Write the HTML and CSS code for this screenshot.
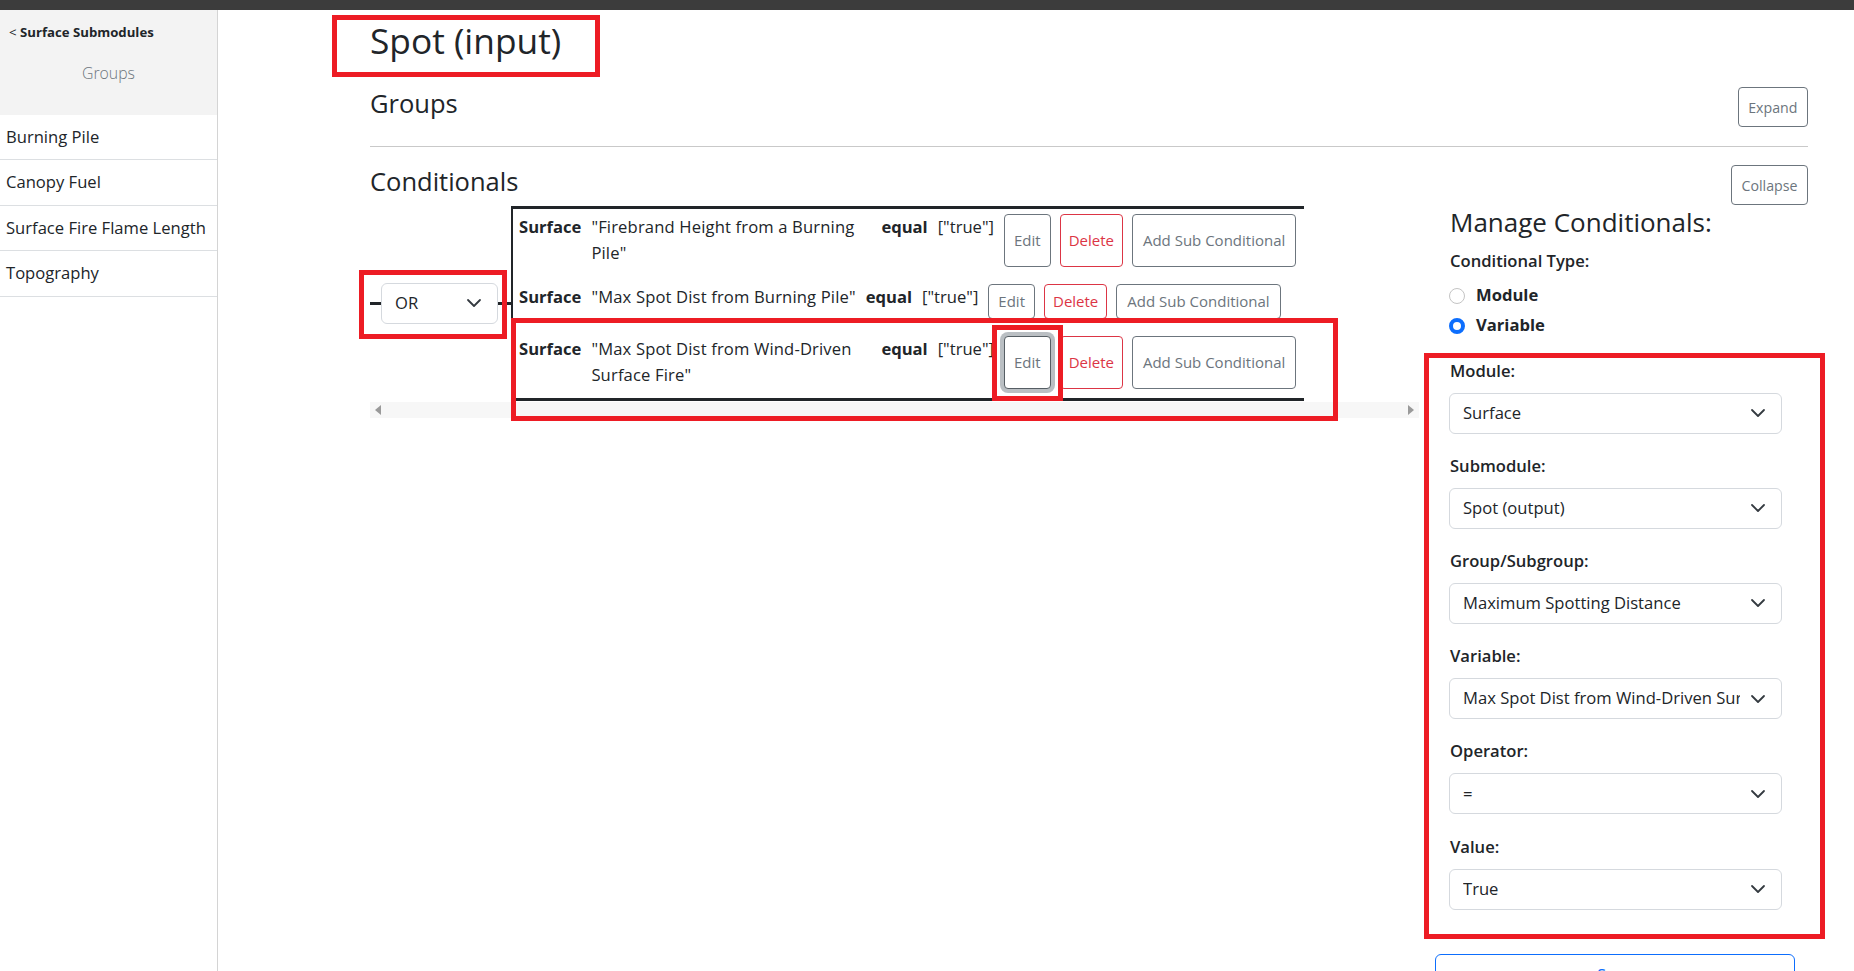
FILE: index.html
```html
<!DOCTYPE html>
<html lang="en">
<head>
<meta charset="utf-8">
<title>Spot (input)</title>
<link rel="stylesheet" href="styles.css">
</head>
<body>
<div class="topbar"></div>
<div class="app">
  <aside class="sidebar">
    <div class="side-head">
      <div class="back">&lt; <b>Surface Submodules</b></div>
      <div class="side-title">Groups</div>
    </div>
    <ul class="side-list">
      <li>Burning Pile</li>
      <li>Canopy Fuel</li>
      <li>Surface Fire Flame Length</li>
      <li>Topography</li>
    </ul>
  </aside>
  <main class="main">
    <div class="content">
      <h1 class="page-title">Spot (input)</h1>
      <div class="section-head groups-head">
        <h2>Groups</h2>
        <button class="outline-btn">Expand</button>
      </div>
      <hr class="rule">
      <div class="section-head cond-head">
        <h2>Conditionals</h2>
        <button class="outline-btn">Collapse</button>
      </div>
      <div class="cond-body">
        <div class="cond-left">
          <div class="logic">
            <span class="dash"></span>
            <div class="select or-select">
              <span class="sel-text">OR</span>
              <svg viewBox="0 0 16 16"><path d="M2 5l6 6 6-6" fill="none" stroke="#343a40" stroke-width="1.8" stroke-linecap="round" stroke-linejoin="round"/></svg>
            </div>
            <span class="dash dash-r"></span>
            <div class="cond-table">
              <div class="c-row">
                <span class="c-mod">Surface</span>
                <span class="c-name">"Firebrand Height from a Burning Pile"</span>
                <span class="c-op">equal</span>
                <span class="c-val">["true"]</span>
                <div class="c-actions">
                  <button class="btn">Edit</button>
                  <button class="btn btn-del">Delete</button>
                  <button class="btn btn-add">Add Sub Conditional</button>
                </div>
              </div>
              <div class="c-row">
                <span class="c-mod">Surface</span>
                <span class="c-name">"Max Spot Dist from Burning Pile"</span>
                <span class="c-op">equal</span>
                <span class="c-val">["true"]</span>
                <div class="c-actions">
                  <button class="btn">Edit</button>
                  <button class="btn btn-del">Delete</button>
                  <button class="btn btn-add">Add Sub Conditional</button>
                </div>
              </div>
              <div class="c-row">
                <span class="c-mod">Surface</span>
                <span class="c-name">"Max Spot Dist from Wind-Driven Surface Fire"</span>
                <span class="c-op">equal</span>
                <span class="c-val">["true"]</span>
                <div class="c-actions">
                  <button class="btn btn-focus">Edit</button>
                  <button class="btn btn-del">Delete</button>
                  <button class="btn btn-add">Add Sub Conditional</button>
                </div>
              </div>
            </div>
          </div>
          <div class="hscroll">
            <span class="arr arr-l"></span>
            <span class="arr arr-r"></span>
          </div>
        </div>
        <div class="cond-right">
          <h3 class="mc-title">Manage Conditionals:</h3>
          <div class="field-label ctype">Conditional Type:</div>
          <div class="radios">
            <div class="radio-row"><span class="radio"></span>Module</div>
            <div class="radio-row"><span class="radio checked"></span>Variable</div>
          </div>
          <div class="fields">
            <div class="field">
              <div class="field-label">Module:</div>
              <div class="select wide"><span class="sel-text">Surface</span><svg viewBox="0 0 16 16"><path d="M2 5l6 6 6-6" fill="none" stroke="#343a40" stroke-width="1.8" stroke-linecap="round" stroke-linejoin="round"/></svg></div>
            </div>
            <div class="field">
              <div class="field-label">Submodule:</div>
              <div class="select wide"><span class="sel-text">Spot (output)</span><svg viewBox="0 0 16 16"><path d="M2 5l6 6 6-6" fill="none" stroke="#343a40" stroke-width="1.8" stroke-linecap="round" stroke-linejoin="round"/></svg></div>
            </div>
            <div class="field">
              <div class="field-label">Group/Subgroup:</div>
              <div class="select wide"><span class="sel-text">Maximum Spotting Distance</span><svg viewBox="0 0 16 16"><path d="M2 5l6 6 6-6" fill="none" stroke="#343a40" stroke-width="1.8" stroke-linecap="round" stroke-linejoin="round"/></svg></div>
            </div>
            <div class="field">
              <div class="field-label">Variable:</div>
              <div class="select wide"><span class="sel-text">Max Spot Dist from Wind-Driven Surface Fire</span><svg viewBox="0 0 16 16"><path d="M2 5l6 6 6-6" fill="none" stroke="#343a40" stroke-width="1.8" stroke-linecap="round" stroke-linejoin="round"/></svg></div>
            </div>
            <div class="field">
              <div class="field-label">Operator:</div>
              <div class="select wide"><span class="sel-text">=</span><svg viewBox="0 0 16 16"><path d="M2 5l6 6 6-6" fill="none" stroke="#343a40" stroke-width="1.8" stroke-linecap="round" stroke-linejoin="round"/></svg></div>
            </div>
            <div class="field">
              <div class="field-label">Value:</div>
              <div class="select wide"><span class="sel-text">True</span><svg viewBox="0 0 16 16"><path d="M2 5l6 6 6-6" fill="none" stroke="#343a40" stroke-width="1.8" stroke-linecap="round" stroke-linejoin="round"/></svg></div>
            </div>
          </div>
          <button class="save-btn">Save</button>
        </div>
      </div>
    </div>
  </main>
</div>

<div class="anno anno-title"></div>
<div class="anno anno-or"></div>
<div class="anno anno-row"></div>
<div class="anno anno-edit"></div>
<div class="anno anno-panel"></div>
</body>
</html>
```

FILE: styles.css
```css
* { box-sizing: border-box; margin: 0; padding: 0; }

html, body { height: 100%; }

body {
  font-family: "Open Sans", "Noto Sans", sans-serif;
  font-size: 16.6px;
  line-height: 26.4px;
  color: #212529;
  background: #fff;
  overflow: hidden;
  position: relative;
}

button { font-family: inherit; cursor: pointer; }

.topbar { height: 10px; background: #3c3c3c; }

.app { display: flex; min-height: calc(100vh - 10px); }

/* Sidebar */
.sidebar {
  width: 218px;
  flex: none;
  border-right: 1px solid #d4d4d4;
}
.side-head {
  background: #f3f3f3;
  height: 105px;
  padding: 13px 9px 0 9px;
}
.back { font-size: 13.2px; line-height: 18px; }
.back b { font-weight: 700; }
.side-title {
  font-size: 15.8px;
  font-weight: 300;
  color: #6c757d;
  line-height: 24px;
  text-align: center;
  margin-top: 20px;
}
.side-list { list-style: none; }
.side-list li {
  padding: 9px 6px;
  border-bottom: 1px solid #dcdfe2;
}

/* Main */
.main { flex: 1; padding: 10px 0 0 152px; }
.content { width: 1438px; }

.page-title {
  font-size: 35.3px;
  font-weight: 500;
  line-height: 42px;
  margin-top: -1px;
}

.section-head {
  display: flex;
  justify-content: space-between;
  align-items: flex-start;
}
.section-head h2 {
  font-size: 25.5px;
  font-weight: 500;
  line-height: 30.6px;
}
.groups-head { margin-top: 26px; }
.groups-head h2 { margin-top: 1px; }
.cond-head { margin-top: 18px; }
.cond-head h2 { margin-top: 1px; }

.outline-btn {
  height: 40px;
  padding: 0 9.5px;
  border: 1px solid #6c757d;
  border-radius: 4px;
  background: #fff;
  color: #6c757d;
  font-size: 14.2px;
}

.rule {
  border: 0;
  border-top: 1px solid #c9c9c9;
  margin-top: 19px;
}

.cond-body {
  display: grid;
  grid-template-columns: 1049px 358px;
  column-gap: 31px;
  margin-top: 1px;
  align-items: start;
}

/* Left: logic tree */
.logic { display: flex; align-items: center; }
.dash { width: 11px; height: 3px; background: #212529; flex: none; }
.dash-r { width: 13px; }

.select {
  display: flex;
  align-items: center;
  height: 41px;
  border: 1px solid #d5d9de;
  border-radius: 6px;
  padding: 0 15px 0 13px;
  background: #fff;
}
.sel-text { flex: 1; white-space: nowrap; overflow: hidden; }
.select svg { flex: none; width: 16px; height: 16px; margin-left: 10px; }
.or-select { width: 117px; flex: none; }
.wide { width: 333px; }

.cond-table {
  width: 793px;
  flex: none;
  border-left: 2px solid #212529;
  border-top: 3px solid #212529;
  border-bottom: 3px solid #212529;
  padding: 5px 0 9px 6px;
  display: flex;
  flex-direction: column;
  gap: 17px;
}
.c-row { display: flex; gap: 10px; align-items: stretch; }
.c-mod, .c-op { font-weight: 700; flex: none; }
.c-name { max-width: 280px; letter-spacing: 0.15px; }
.c-val { flex: none; }
.c-actions { display: flex; gap: 9px; flex: none; }

.btn {
  display: flex;
  align-items: center;
  min-height: 35px;
  padding: 0 9px;
  border: 1px solid #6c757d;
  border-radius: 4px;
  background: #fff;
  color: #6c757d;
  font-size: 15px;
  line-height: 20px;
}
.btn-del { border-color: #dc3545; color: #dc3545; padding: 0 8px; }
.btn-add { padding: 0 10px; }
.btn-focus {
  border-color: #565e64;
  box-shadow: 0 0 0 4px rgba(130, 138, 145, 0.55);
}

.hscroll {
  height: 16px;
  margin-top: 1px;
  background: #f7f7f7;
  display: flex;
  justify-content: space-between;
  align-items: center;
  padding: 0 5px;
}
.arr { width: 0; height: 0; border-top: 5.5px solid transparent; border-bottom: 5.5px solid transparent; }
.arr-l { border-right: 6px solid #9a9a9a; }
.arr-r { border-left: 6px solid #9a9a9a; }

/* Right: manage panel */
.mc-title {
  font-size: 26px;
  font-weight: 500;
  line-height: 30.6px;
  margin-top: 1px;
}
.field-label { font-weight: 600; line-height: 26px; }
.ctype { margin-top: 10px; }
.radios { margin-top: 7px; }
.radio-row {
  display: flex;
  align-items: center;
  gap: 11px;
  height: 30px;
  font-weight: 700;
  margin-left: -1px;
}
.radio {
  width: 16px;
  height: 16px;
  border-radius: 50%;
  border: 1px solid #c4c4c4;
  background: #fff;
  flex: none;
}
.radio.checked { border: 4px solid #0d6efd; }

.fields { margin-top: 17px; display: flex; flex-direction: column; gap: 19.2px; }
.field .field-label { margin-bottom: 9px; }
.field .select { margin-left: -1px; }

.save-btn {
  display: block;
  width: 360px;
  height: 42px;
  margin: 44px 0 0 -15px;
  border: 1px solid #0d6efd;
  border-radius: 6px;
  background: #fff;
  color: #0d6efd;
  font-size: 16.6px;
}

/* Red annotation boxes drawn over the screenshot */
.anno { position: absolute; border: 5px solid #ed1c24; pointer-events: none; }
.anno-title { left: 332px; top: 15px; width: 268px; height: 62px; }
.anno-or { left: 359px; top: 270px; width: 148px; height: 69px; }
.anno-row { left: 511px; top: 318px; width: 827px; height: 103px; }
.anno-edit { left: 992px; top: 325px; width: 71px; height: 76px; }
.anno-panel { left: 1424px; top: 353px; width: 401px; height: 586px; }
```
